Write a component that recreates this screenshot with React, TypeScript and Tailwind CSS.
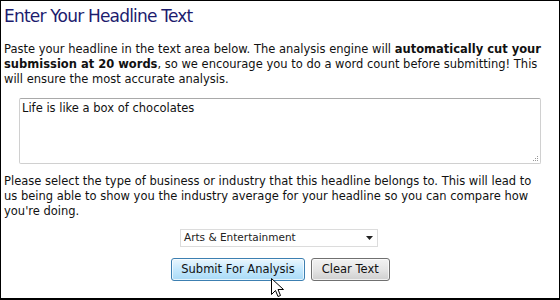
import React from 'react';

export default function App() {
  const [text, setText] = React.useState('Life is like a box of chocolates');

  return (
    <div className="w-[560px] h-[300px] bg-white border border-black border-b-2 relative overflow-hidden font-['DejaVu_Sans',Verdana,sans-serif] text-[#111]">
      <h1 className="text-[17px] leading-[22px] tracking-[-0.8px] text-[#1c1c6e] pl-[3px] pt-[4px]">Enter Your Headline Text</h1>

      <p className="text-[11.5px] leading-[15px] pl-[3px] pr-[11px] mt-[15px]">
        Paste your headline in the text area below. The analysis engine will{' '}
        <b>automatically cut your submission at 20 words</b>, so we encourage you to do a word count before
        submitting! This will ensure the most accurate analysis.
      </p>

      <div className="pl-[18px] pr-[18px] mt-[11px]">
        <div className="relative w-[522px] h-[66px]">
          <textarea
            value={text}
            onChange={(e) => setText(e.target.value)}
            className="block w-full h-full border border-[#d0d0d0] border-t-[#a9a9a9] rounded-[2px] px-[2px] py-[2px] text-[11.5px] leading-[15px] outline-none resize-none"
          />
          <svg className="absolute right-[3px] bottom-[3px]" width="5" height="5" viewBox="0 0 5 5">
            <rect x="4" y="0" width="1" height="1" fill="#999" />
            <rect x="2" y="2" width="1" height="1" fill="#999" />
            <rect x="4" y="2" width="1" height="1" fill="#999" />
            <rect x="0" y="4" width="1" height="1" fill="#999" />
            <rect x="2" y="4" width="1" height="1" fill="#999" />
            <rect x="4" y="4" width="1" height="1" fill="#999" />
          </svg>
        </div>
      </div>

      <p className="text-[11.5px] leading-[15px] pl-[3px] pr-[11px] mt-[10px]">
        Please select the type of business or industry that this headline belongs to. This will lead to us being
        able to show you the industry average for your headline so you can compare how you're doing.
      </p>

      <div className="flex justify-center mt-[10px] pr-[2px]">
        <div className="relative w-[198px] h-[18px] border border-[#dcdcdc] bg-white flex items-center">
          <span className="text-[10.5px] pl-[3px] text-[#222]">Arts &amp; Entertainment</span>
          <svg className="absolute right-[4px] top-[6px]" width="7" height="4" viewBox="0 0 7 4">
            <path d="M0 0H7L3.5 4Z" fill="#222" />
          </svg>
        </div>
      </div>

      <div className="flex justify-center gap-[6px] mt-[11px] pl-[1px]">
        <button className="h-[23px] px-[9px] text-[11.5px] text-[#111] rounded-[3px] border border-[#3c7fb1] bg-gradient-to-b from-[#eaf6fd] via-[#c4e8fd] to-[#a9daf6] shadow-[inset_0_0_0_1px_rgba(255,255,255,0.7)]">
          Submit For Analysis
        </button>
        <button className="h-[23px] px-[10px] text-[11.5px] text-[#111] rounded-[3px] border border-[#707070] bg-gradient-to-b from-[#f2f2f2] via-[#e5e5e5] to-[#cfcfcf] shadow-[inset_0_0_0_1px_rgba(255,255,255,0.7)]">
          Clear Text
        </button>
      </div>

      <svg className="absolute left-[270px] top-[277px]" width="13" height="20" viewBox="0 0 13 20">
        <path d="M0.5 0.5V16.5L4.5 12.5L7 18.5L9.5 17.5L7 11.5H12.5Z" fill="#fff" stroke="#000" strokeWidth="1" strokeLinejoin="round" />
      </svg>
    </div>
  );
}
